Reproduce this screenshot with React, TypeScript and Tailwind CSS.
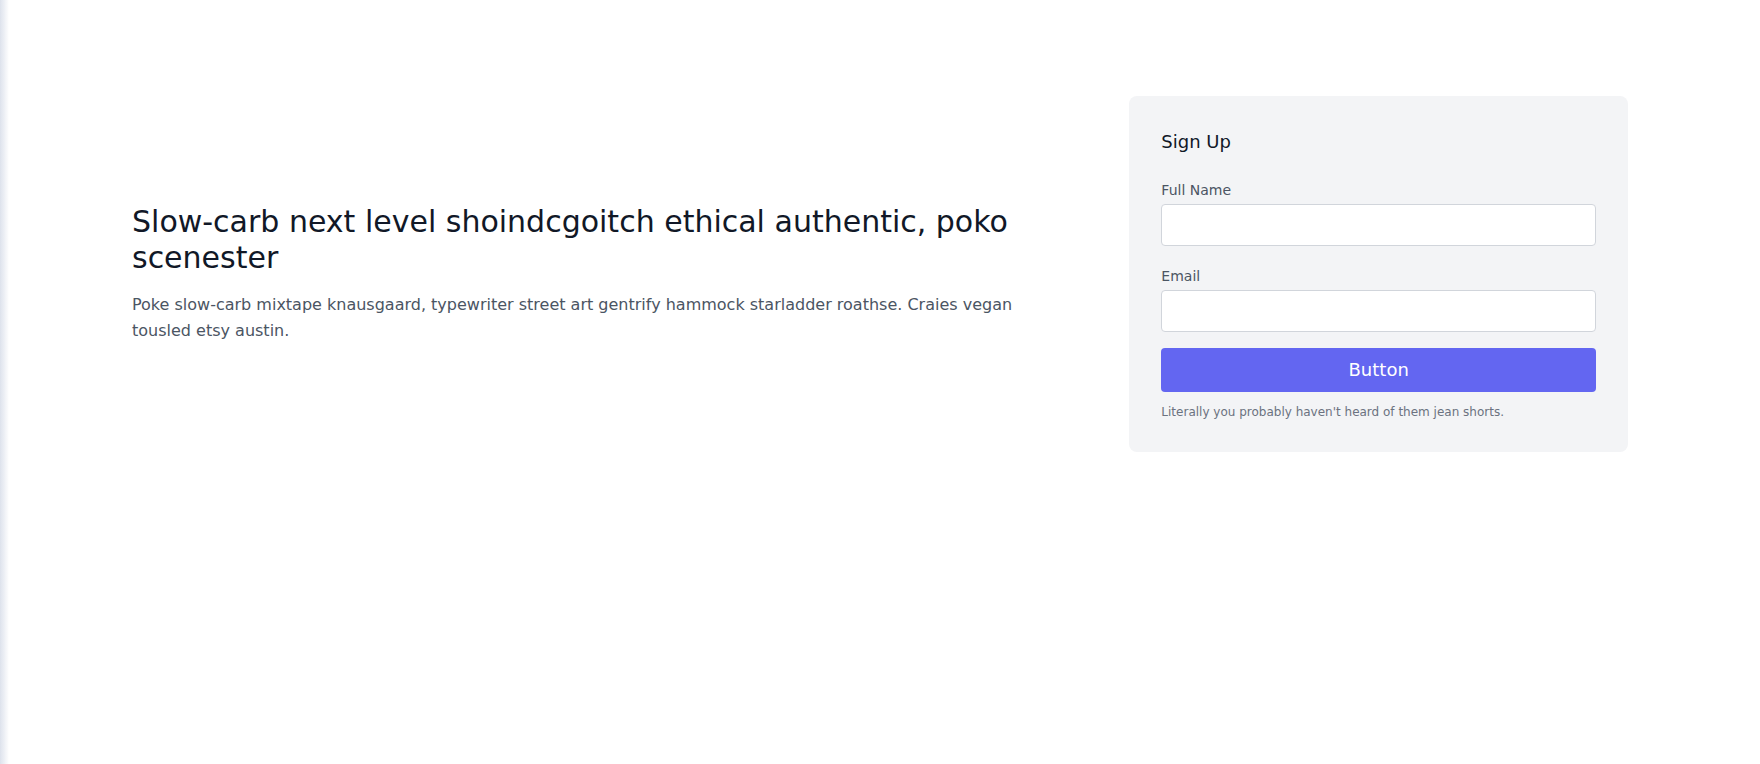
export default function App() {
  return (
    <div className="relative min-h-screen bg-white font-['DejaVu_Sans',sans-serif]">
      <div className="fixed inset-y-0 left-0 w-[9px] bg-linear-to-r from-[#dde2ec] to-transparent" />
      <section className="text-[#4b5563]">
        <div className="container mx-auto flex flex-wrap items-center px-5 py-24">
          <div className="w-3/5 pr-0">
            <h1 className="text-3xl font-medium text-[#111827]">
              Slow-carb next level shoindcgoitch ethical authentic, poko scenester
            </h1>
            <p className="mt-4 leading-relaxed">
              Poke slow-carb mixtape knausgaard, typewriter street art gentrify hammock starladder roathse. Craies
              vegan tousled etsy austin.
            </p>
          </div>
          <div className="ml-auto flex w-2/6 flex-col rounded-lg bg-[#f3f4f6] p-8">
            <h2 className="mb-5 text-lg font-medium text-[#111827]">Sign Up</h2>
            <div className="relative mb-4">
              <label htmlFor="full-name" className="text-sm leading-7 text-[#4b5563]">
                Full Name
              </label>
              <input
                type="text"
                id="full-name"
                className="w-full rounded border border-[#d1d5db] bg-white px-3 py-1 text-base leading-8 text-[#374151] outline-none"
              />
            </div>
            <div className="relative mb-4">
              <label htmlFor="email" className="text-sm leading-7 text-[#4b5563]">
                Email
              </label>
              <input
                type="email"
                id="email"
                className="w-full rounded border border-[#d1d5db] bg-white px-3 py-1 text-base leading-8 text-[#374151] outline-none"
              />
            </div>
            <button className="rounded border-0 bg-[#6366f1] px-8 py-2 text-lg text-white">Button</button>
            <p className="mt-3 text-xs text-[#6b7280]">Literally you probably haven't heard of them jean shorts.</p>
          </div>
        </div>
      </section>
    </div>
  );
}
